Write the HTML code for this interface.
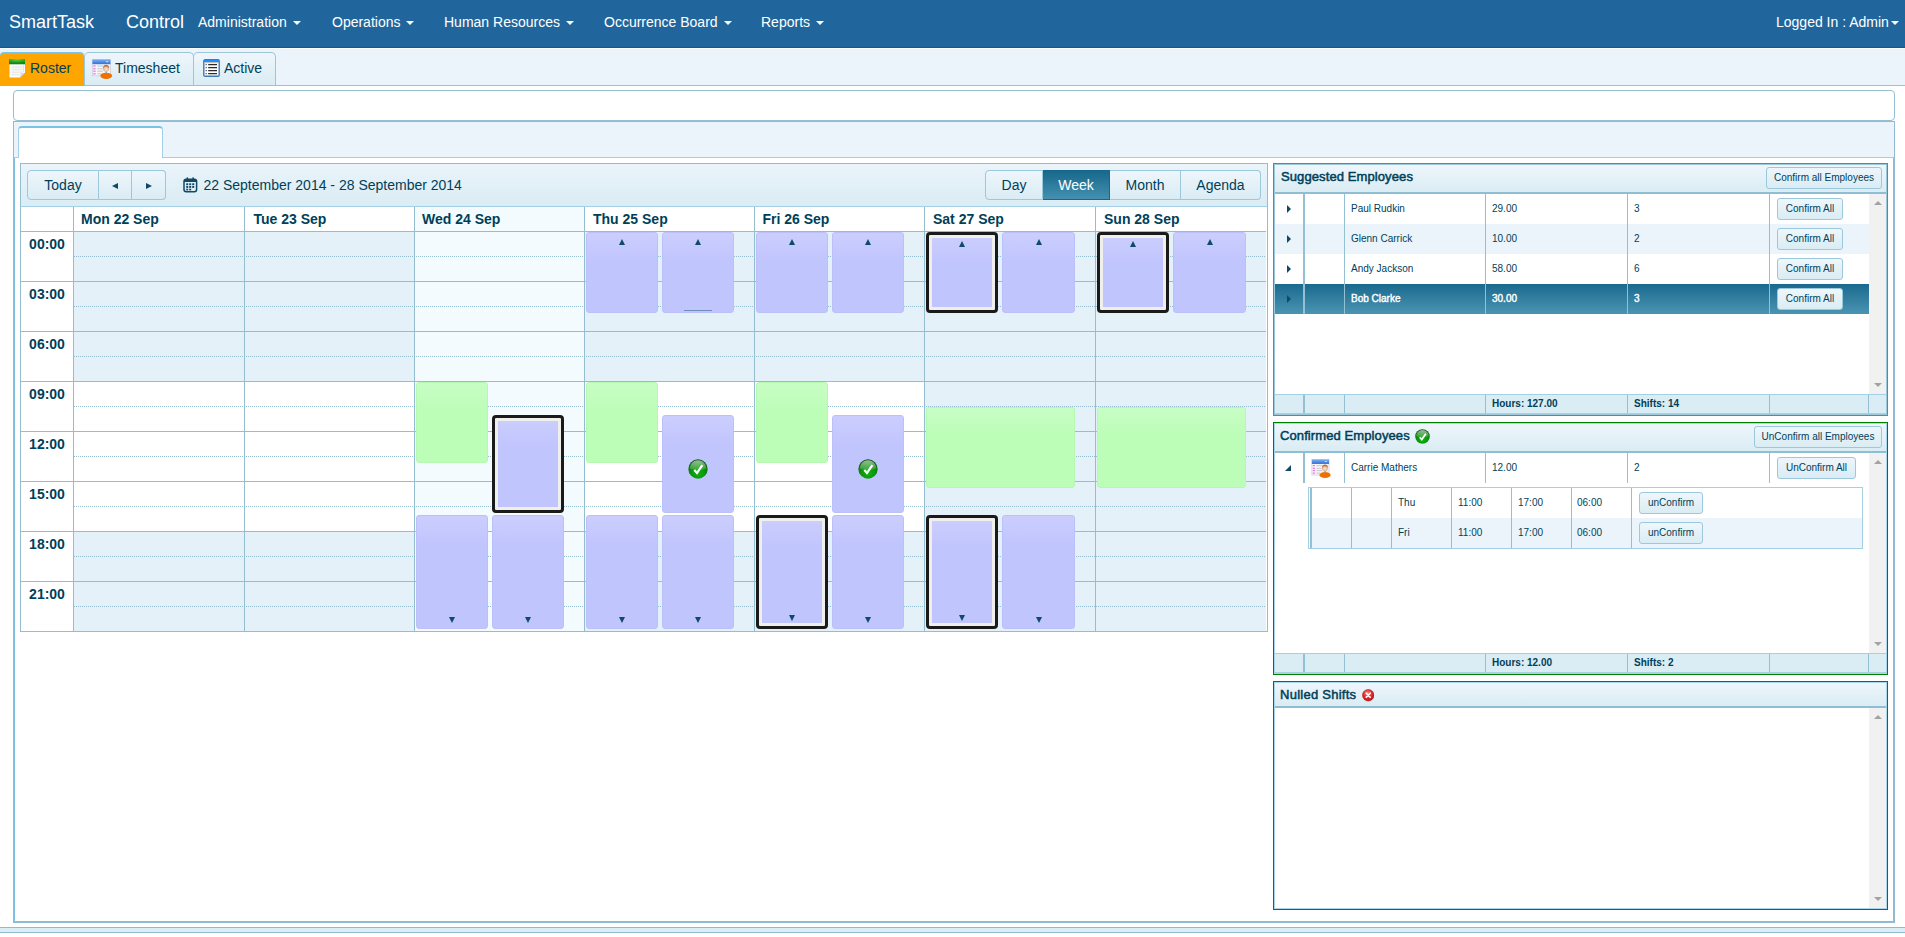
<!DOCTYPE html>
<html>
<head>
<meta charset="utf-8">
<title>SmartTask Control</title>
<style>
*{box-sizing:border-box;margin:0;padding:0}
html,body{width:1905px;height:937px;overflow:hidden;background:#fff}
body{font-family:"Liberation Sans",sans-serif;color:#003f59;position:relative;font-size:12px}
.abs{position:absolute}
/* navbar */
#nav{left:0;top:0;width:1905px;height:48px;background:#20669c;border-bottom:1px solid #10598f}
#nav span{position:absolute;color:#fff;white-space:nowrap}
.brand{font-size:18px;top:12px}
.mi{font-size:14px;top:14px}
.caret{display:inline-block;width:0;height:0;border-left:4px solid transparent;border-right:4px solid transparent;border-top:4px solid #fff;vertical-align:middle;margin-left:2px}
/* top tab strip */
#tabs{left:0;top:48px;width:1905px;height:38px;background:#ecf4fb;box-shadow:inset 0 1px 0 #f9fcfe;border-bottom:1px solid #86c6e6}
.tab{position:absolute;top:4px;height:33px;border:1px solid #9dc6d8;border-bottom:none;border-radius:5px 5px 0 0;background:linear-gradient(#eef6fb,#daecf4);font-size:14px;color:#003f59;line-height:30px;white-space:nowrap}
.tab.on{background:#ffa500;border:none;border-top:2px solid #7ac3e6;height:34px;line-height:29px;border-radius:4px 4px 0 0}
/* panels */
#bar{left:13px;top:90px;width:1882px;height:31px;border:1px solid #94c0d2;border-radius:4px;background:#fff}
#panel{left:13px;top:121px;width:1882px;height:802px;border:1px solid #8fbcd0;background:#fff}
#pstrip{left:14px;top:122px;width:1880px;height:36px;background:#ecf4fb;border-bottom:1px solid #a3d0e4}
#ptab{left:18px;top:126px;width:145px;height:32px;background:#fff;border:1px solid #a3d0e4;border-top:2px solid #7ac3e6;border-bottom:none;border-radius:4px 4px 0 0}
#pleft{left:14px;top:158px;width:1880px;height:764px;border:1px solid #7cc1e1;border-top:none}

/* scheduler */
#sch{left:20px;top:163px;width:1248px;height:469px;border:1px solid #94bdd0;background:#fff;overflow:hidden;font-size:14px}
.tb{left:0;top:0;width:1246px;height:43px;background:linear-gradient(#eaf4fa,#daecf4);border-bottom:1px solid #a3d0e4}
.btng{height:30px;white-space:nowrap;font-size:0}
.btng .b{display:inline-block;height:30px;line-height:28px;text-align:center;font-size:14px;border:1px solid #9cc8dc;border-left:none;vertical-align:top;color:#003f59;background:linear-gradient(#eef6fb,#daecf4)}
.btng .b.f{border-left:1px solid #9cc8dc;border-radius:4px 0 0 4px}
.btng .b.l{border-radius:0 4px 4px 0}
.btng .b.on{background:linear-gradient(#17688c,#4590b0);color:#fff;border-color:#13688c}
.tl,.tr{display:inline-block;width:0;height:0;border-top:3.5px solid transparent;border-bottom:3.5px solid transparent;vertical-align:middle;margin-top:0px}
.tl{border-right:6px solid #0f4a66}
.tr{border-left:6px solid #0f4a66}
.hl{height:1px;background:#94bdd0}
.vl{width:1px;background:#94bdd0}
.dl{height:1px;background-image:linear-gradient(90deg,#94bdd0 50%,transparent 50%);background-size:2px 1px}
.dh{font-weight:bold;font-size:14px;white-space:nowrap;line-height:16px}
.th{font-weight:bold;font-size:14px;text-align:center;line-height:16px}
.ev{border-radius:3px}
.ev.p{background:linear-gradient(#cbcefd 0,#c1c5fd 28px,#c1c5fd);border:1px solid #bcc0fa}
.ev.g{background:linear-gradient(#c8fec4 0,#bcfdb8 28px,#bcfdb8);border:1px solid #b6f7b2}
.ev.sel{border:3px solid #1a1a1a;box-shadow:inset 0 0 0 3px #efefec;border-radius:4px}
.au,.ad{position:absolute;left:50%;margin-left:-3px;width:0;height:0;border-left:3.5px solid transparent;border-right:3.5px solid transparent}
.au{top:6px;border-bottom:6px solid #0f4a66}
.ad{bottom:5px;border-top:6px solid #0f4a66}
.sel .au{top:6px;margin-left:-3.5px}
.sel .ad{bottom:5px;margin-left:-3.5px}
.ul{position:absolute;left:21px;bottom:1px;width:28px;height:1px;background:#6f8fb5}
.ck{position:absolute;left:50%;top:50%;margin:-5px 0 0 -10px}

/* right panels */
.rp{background:#fff;overflow:hidden;font-size:10px}
.rh{background:linear-gradient(#eef6fb,#daecf4);border-bottom:2px solid #8fbdd2}
.rt{position:absolute;font-weight:normal;font-size:13px;white-space:nowrap;color:#003f59;line-height:16px;-webkit-text-stroke:0.5px #003f59;letter-spacing:0.1px}
.kb{position:absolute;border:1px solid #9cc8dc;border-radius:3px;background:linear-gradient(#eef6fb,#daecf4);font-size:10px;text-align:center;white-space:nowrap;color:#003f59}
.row{background:#fff}
.row.alt{background:#ebf4fa}
.row.selr{background:linear-gradient(#1a6a8e,#4b94b3);color:#fff}
.row.selr .ct{color:#fff;-webkit-text-stroke:0.4px #fff}
.cv{position:absolute;top:0;bottom:0;width:1px;background:#94c0d4}
.ct{position:absolute;top:9px;line-height:12px;font-size:10px;white-space:nowrap}
.ft{position:absolute;top:3px;line-height:12px;font-size:10px;font-weight:bold;white-space:nowrap}
.rf{background:#daecf4;border-top:1px solid #a3d0e4}
.ex{position:absolute;width:0;height:0;border-top:4.5px solid transparent;border-bottom:4.5px solid transparent;border-left:4.5px solid #0f4a66}
.exd{position:absolute;width:0;height:0;border-left:6px solid transparent;border-bottom:6px solid #0f4a66}
.sb{background:#f1f1f1}
.su,.sd{position:absolute;left:5px;width:0;height:0;border-left:4px solid transparent;border-right:4px solid transparent}
.su{top:7px;border-bottom:4px solid #a3a3a3}
.sd{bottom:7px;border-top:4px solid #a3a3a3}
</style>
</head>
<body>
<div id="nav" class="abs">
  <span class="brand" style="left:9px">SmartTask</span>
  <span class="brand" style="left:126px">Control</span>
  <span class="mi" style="left:198px">Administration <i class="caret"></i></span>
  <span class="mi" style="left:332px">Operations <i class="caret"></i></span>
  <span class="mi" style="left:444px">Human Resources <i class="caret"></i></span>
  <span class="mi" style="left:604px">Occurrence Board <i class="caret"></i></span>
  <span class="mi" style="left:761px">Reports <i class="caret"></i></span>
  <span class="mi" style="left:1776px">Logged In : Admin<i class="caret" style="margin-left:2px"></i></span>
</div>
<div id="tabs" class="abs">
  <div class="tab" style="left:84px;width:110px"><svg style="position:absolute;left:7px;top:6px" width="21" height="21" viewBox="0 0 21 21"><defs><linearGradient id="gb" x1="0" y1="0" x2="0" y2="1"><stop offset="0" stop-color="#7db2f7"/><stop offset="1" stop-color="#2f6fd6"/></linearGradient><radialGradient id="gh" cx="50%" cy="60%" r="60%"><stop offset="0" stop-color="#fde6d2"/><stop offset="1" stop-color="#d9a27a"/></radialGradient></defs><rect x="0.4" y="0.4" width="18" height="16.4" fill="#f6f6f9" stroke="#c9c9d6" stroke-width="0.7"/><rect x="0.4" y="0.4" width="18" height="4.8" fill="url(#gb)"/><rect x="14" y="2" width="2.2" height="1.2" fill="#b9d5fb"/><g fill="#ef6be6"><rect x="1.3" y="6.4" width="2.3" height="1.2"/><rect x="1.3" y="9.2" width="2.3" height="1.2"/><rect x="1.3" y="11.6" width="2.3" height="1.2"/><rect x="1.3" y="14.2" width="2.3" height="1.2"/></g><g fill="#c4c4cc"><rect x="5.2" y="6.5" width="6" height="1"/><rect x="5.2" y="9.3" width="5.6" height="1"/><rect x="5.2" y="11.7" width="5.6" height="1"/><rect x="5.2" y="14.3" width="4" height="1"/></g><ellipse cx="14.2" cy="16.8" rx="5.9" ry="3.1" fill="#ee7100"/><rect x="13.4" y="12.3" width="1.6" height="2" fill="#9aa0a6"/><circle cx="14.1" cy="9.6" r="3.1" fill="url(#gh)"/><path d="M10.9 9.2 Q11.2 5.6 14.2 5.7 Q17.2 5.7 17.3 9.2 Q15.8 7.3 14.1 7.6 Q12.4 7.3 10.9 9.2Z" fill="#b07a4c"/></svg><span style="position:absolute;left:30px">Timesheet</span></div>
  <div class="tab" style="left:193px;width:83px"><svg style="position:absolute;left:9px;top:6px" width="17" height="18" viewBox="0 0 17 18"><rect x="0.8" y="0.8" width="15.4" height="16.4" rx="1.2" fill="#fff" stroke="#3f79b3" stroke-width="1.4"/><rect x="1" y="1" width="15" height="2.2" fill="#1e8fff"/><rect x="1.6" y="3.2" width="13.8" height="1" fill="#bdb6b0"/><g stroke="#2a2a2a" stroke-width="1.15"><path d="M5.2 5.6H14M5.2 8.6H14M5.2 11.6H14M5.2 14.6H14"/></g><g fill="#2a2a2a"><rect x="2.6" y="5.1" width="1.1" height="1.1"/><rect x="2.6" y="8.1" width="1.1" height="1.1"/><rect x="2.6" y="11.1" width="1.1" height="1.1"/><rect x="2.6" y="14.1" width="1.1" height="1.1"/></g></svg><span style="position:absolute;left:30px">Active</span></div>
  <div class="tab on" style="left:0;width:84px"><svg style="position:absolute;left:9px;top:5px" width="17" height="19" viewBox="0 0 17 19"><defs><radialGradient id="gc" cx="50%" cy="0%" r="80%"><stop offset="0" stop-color="#6fdc4a"/><stop offset="1" stop-color="#0e8a10"/></radialGradient></defs><path d="M0.5 1 H16 V13.5 L11 18.5 H0.5Z" fill="#fdfdfd"/><path d="M16 13.5 L11 18.5 L11.6 14.2Z" fill="#d8d8d8"/><rect x="0" y="0" width="16" height="5.3" fill="url(#gc)"/><g stroke="#dcdcdc" stroke-width="0.8"><path d="M2.5 8.2H13.5M2.5 10.7H13.5M2.5 13.2H13.5M2.5 15.7H10"/></g><g stroke="#ececec" stroke-width="0.7"><path d="M4.5 6.5V16.5M7.2 6.5V16.5M9.9 6.5V16.5M12.6 6.5V14"/></g><path d="M14.6 6V13" stroke="#e9c6f5" stroke-width="0.7"/></svg><span style="position:absolute;left:30px">Roster</span></div>
</div>
<div id="bar" class="abs"></div>
<div id="panel" class="abs"></div>
<div id="pstrip" class="abs"></div>
<div id="ptab" class="abs"></div>
<div id="pleft" class="abs"></div>
<!--SCHED-->
<div id="sch" class="abs">
<div class="abs tb"></div>
<div class="abs btng" style="left:6px;top:6px;width:139px"><span class="b f" style="width:72px">Today</span><span class="b" style="width:33px"><i class="tl"></i></span><span class="b l" style="width:34px"><i class="tr"></i></span></div>
<div class="abs" style="left:182.5px;top:13px;font-size:14px;white-space:nowrap">22 September 2014 - 28 September 2014</div>
<svg class="abs" style="left:162px;top:12.5px" width="15" height="16" viewBox="0 0 15 16"><rect x="1" y="2.2" width="12.6" height="12.6" rx="2.2" fill="none" stroke="#0f4a66" stroke-width="1.5"/><path d="M1 5V4.2Q1 2.2 3 2.2H11.6Q13.6 2.2 13.6 4.2V5Z" fill="#0f4a66"/><rect x="3.6" y="0.4" width="1.5" height="2.2" fill="#0f4a66"/><rect x="9.4" y="0.4" width="1.5" height="2.2" fill="#0f4a66"/><g fill="#0f4a66"><rect x="3.2" y="6.3" width="2" height="1.9"/><rect x="6.2" y="6.3" width="2" height="1.9"/><rect x="9.2" y="6.3" width="2" height="1.9"/><rect x="3.2" y="9" width="2" height="1.9"/><rect x="6.2" y="9" width="2" height="1.9"/><rect x="9.2" y="9" width="2" height="1.9"/><rect x="3.2" y="11.7" width="2" height="1.7"/><rect x="6.2" y="11.7" width="2" height="1.7"/></g></svg>
<div class="abs btng" style="left:964px;top:6px;width:277px"><span class="b f" style="width:58px">Day</span><span class="b on" style="width:67px">Week</span><span class="b" style="width:71px">Month</span><span class="b l" style="width:80px">Agenda</span></div>
<div class="abs" style="left:0;top:43px;width:1246px;height:24px;background:#fff"></div>
<div class="abs" style="left:394px;top:43px;width:169px;height:24px;background:#f4fbfe"></div>
<div class="abs" style="left:0;top:68px;width:52px;height:399px;background:#fff"></div>
<div class="abs" style="left:53px;top:68px;width:170px;height:150px;background:#e4f1f8"></div>
<div class="abs" style="left:53px;top:218px;width:170px;height:149px;background:#fff"></div>
<div class="abs" style="left:53px;top:368px;width:170px;height:99px;background:#e4f1f8"></div>
<div class="abs" style="left:224px;top:68px;width:169px;height:150px;background:#e4f1f8"></div>
<div class="abs" style="left:224px;top:218px;width:169px;height:149px;background:#fff"></div>
<div class="abs" style="left:224px;top:368px;width:169px;height:99px;background:#e4f1f8"></div>
<div class="abs" style="left:394px;top:68px;width:169px;height:399px;background:#f4fbfe"></div>
<div class="abs" style="left:564px;top:68px;width:169px;height:150px;background:#e4f1f8"></div>
<div class="abs" style="left:564px;top:218px;width:169px;height:149px;background:#fff"></div>
<div class="abs" style="left:564px;top:368px;width:169px;height:99px;background:#e4f1f8"></div>
<div class="abs" style="left:734px;top:68px;width:169px;height:150px;background:#e4f1f8"></div>
<div class="abs" style="left:734px;top:218px;width:169px;height:149px;background:#fff"></div>
<div class="abs" style="left:734px;top:368px;width:169px;height:99px;background:#e4f1f8"></div>
<div class="abs" style="left:904px;top:68px;width:170px;height:399px;background:#e4f1f8"></div>
<div class="abs" style="left:1075px;top:68px;width:171px;height:399px;background:#e4f1f8"></div>
<div class="abs hl" style="left:0;top:67px;width:1246px"></div>
<div class="abs hl" style="left:0;top:117px;width:1246px"></div>
<div class="abs hl" style="left:0;top:167px;width:1246px"></div>
<div class="abs hl" style="left:0;top:217px;width:1246px"></div>
<div class="abs hl" style="left:0;top:267px;width:1246px"></div>
<div class="abs hl" style="left:0;top:317px;width:1246px"></div>
<div class="abs hl" style="left:0;top:367px;width:1246px"></div>
<div class="abs hl" style="left:0;top:417px;width:1246px"></div>
<div class="abs dl" style="left:53px;top:92px;width:1193px"></div>
<div class="abs dl" style="left:53px;top:142px;width:1193px"></div>
<div class="abs dl" style="left:53px;top:192px;width:1193px"></div>
<div class="abs dl" style="left:53px;top:242px;width:1193px"></div>
<div class="abs dl" style="left:53px;top:292px;width:1193px"></div>
<div class="abs dl" style="left:53px;top:342px;width:1193px"></div>
<div class="abs dl" style="left:53px;top:392px;width:1193px"></div>
<div class="abs dl" style="left:53px;top:442px;width:1193px"></div>
<div class="abs vl" style="left:52px;top:43px;height:424px"></div>
<div class="abs vl" style="left:223px;top:43px;height:424px"></div>
<div class="abs vl" style="left:393px;top:43px;height:424px"></div>
<div class="abs vl" style="left:563px;top:43px;height:424px"></div>
<div class="abs vl" style="left:733px;top:43px;height:424px"></div>
<div class="abs vl" style="left:903px;top:43px;height:424px"></div>
<div class="abs vl" style="left:1074px;top:43px;height:424px"></div>
<div class="abs dh" style="left:60px;top:47px">Mon 22 Sep</div>
<div class="abs dh" style="left:232.5px;top:47px">Tue 23 Sep</div>
<div class="abs dh" style="left:401px;top:47px">Wed 24 Sep</div>
<div class="abs dh" style="left:572px;top:47px">Thu 25 Sep</div>
<div class="abs dh" style="left:741.5px;top:47px">Fri 26 Sep</div>
<div class="abs dh" style="left:912px;top:47px">Sat 27 Sep</div>
<div class="abs dh" style="left:1083px;top:47px">Sun 28 Sep</div>
<div class="abs th" style="left:0;top:72px;width:52px">00:00</div>
<div class="abs th" style="left:0;top:122px;width:52px">03:00</div>
<div class="abs th" style="left:0;top:172px;width:52px">06:00</div>
<div class="abs th" style="left:0;top:222px;width:52px">09:00</div>
<div class="abs th" style="left:0;top:272px;width:52px">12:00</div>
<div class="abs th" style="left:0;top:322px;width:52px">15:00</div>
<div class="abs th" style="left:0;top:372px;width:52px">18:00</div>
<div class="abs th" style="left:0;top:422px;width:52px">21:00</div>
<div class="abs ev p " style="left:565px;top:68px;width:72px;height:81px"><i class="au"></i></div>
<div class="abs ev p " style="left:641px;top:68px;width:72px;height:81px"><i class="au"></i><i class="ul"></i></div>
<div class="abs ev p " style="left:735px;top:68px;width:72px;height:81px"><i class="au"></i></div>
<div class="abs ev p " style="left:811px;top:68px;width:72px;height:81px"><i class="au"></i></div>
<div class="abs ev p sel" style="left:905px;top:68px;width:72px;height:81px"><i class="au"></i></div>
<div class="abs ev p " style="left:981px;top:68px;width:73px;height:81px"><i class="au"></i></div>
<div class="abs ev p sel" style="left:1076px;top:68px;width:72px;height:81px"><i class="au"></i></div>
<div class="abs ev p " style="left:1152px;top:68px;width:73px;height:81px"><i class="au"></i></div>
<div class="abs ev g" style="left:395px;top:218px;width:72px;height:81px"></div>
<div class="abs ev g" style="left:565px;top:218px;width:72px;height:81px"></div>
<div class="abs ev g" style="left:735px;top:218px;width:72px;height:81px"></div>
<div class="abs ev g" style="left:905px;top:243px;width:149px;height:81px"></div>
<div class="abs ev g" style="left:1076px;top:243px;width:149px;height:81px"></div>
<div class="abs ev p sel" style="left:471px;top:251px;width:72px;height:98px"></div>
<div class="abs ev p" style="left:641px;top:251px;width:72px;height:98px"><svg class="ck" width="20" height="20" viewBox="0 0 20 20"><defs><radialGradient id="g1" cx="50%" cy="72%" r="62%"><stop offset="0" stop-color="#0cb40c"/><stop offset="0.55" stop-color="#0c960c"/><stop offset="0.85" stop-color="#0a7a0c"/><stop offset="1" stop-color="#085c0a"/></radialGradient><linearGradient id="g1h" x1="0" y1="0" x2="0" y2="1"><stop offset="0" stop-color="#fff" stop-opacity="0.6"/><stop offset="1" stop-color="#fff" stop-opacity="0.12"/></linearGradient></defs><circle cx="10" cy="10" r="9.7" fill="url(#g1)"/><path d="M1.6 9.6 A8.4 8.4 0 0 1 18.4 9.6 Q10 12.6 1.6 9.6Z" fill="url(#g1h)"/><path d="M6.3 11 L9 14 L14.4 6.2" fill="none" stroke="#fff" stroke-width="2.2" stroke-linejoin="miter"/></svg></div>
<div class="abs ev p" style="left:811px;top:251px;width:72px;height:98px"><svg class="ck" width="20" height="20" viewBox="0 0 20 20"><defs><radialGradient id="g1" cx="50%" cy="72%" r="62%"><stop offset="0" stop-color="#0cb40c"/><stop offset="0.55" stop-color="#0c960c"/><stop offset="0.85" stop-color="#0a7a0c"/><stop offset="1" stop-color="#085c0a"/></radialGradient><linearGradient id="g1h" x1="0" y1="0" x2="0" y2="1"><stop offset="0" stop-color="#fff" stop-opacity="0.6"/><stop offset="1" stop-color="#fff" stop-opacity="0.12"/></linearGradient></defs><circle cx="10" cy="10" r="9.7" fill="url(#g1)"/><path d="M1.6 9.6 A8.4 8.4 0 0 1 18.4 9.6 Q10 12.6 1.6 9.6Z" fill="url(#g1h)"/><path d="M6.3 11 L9 14 L14.4 6.2" fill="none" stroke="#fff" stroke-width="2.2" stroke-linejoin="miter"/></svg></div>
<div class="abs ev p " style="left:395px;top:351px;width:72px;height:114px"><i class="ad"></i></div>
<div class="abs ev p " style="left:471px;top:351px;width:72px;height:114px"><i class="ad"></i></div>
<div class="abs ev p " style="left:565px;top:351px;width:72px;height:114px"><i class="ad"></i></div>
<div class="abs ev p " style="left:641px;top:351px;width:72px;height:114px"><i class="ad"></i></div>
<div class="abs ev p sel" style="left:735px;top:351px;width:72px;height:114px"><i class="ad"></i></div>
<div class="abs ev p " style="left:811px;top:351px;width:72px;height:114px"><i class="ad"></i></div>
<div class="abs ev p sel" style="left:905px;top:351px;width:72px;height:114px"><i class="ad"></i></div>
<div class="abs ev p " style="left:981px;top:351px;width:73px;height:114px"><i class="ad"></i></div>
<div class="abs" style="left:1245px;top:43px;width:1px;height:425px;background:#fff"></div>
</div>
<!--/SCHED-->
<!--RIGHT-->
<div class="abs" style="left:1273px;top:163px;width:615px;height:253px;background:#7d7d7d"></div>
<div class="abs rp" style="left:1274px;top:164px;width:613px;height:251px;border:1px solid #9cc8dc">
<div class="abs rh" style="left:0;top:0;width:611px;height:29px"><span class="rt" style="left:6px;top:4px">Suggested Employees</span><span class="kb" style="left:491px;top:2px;width:116px;height:22px;line-height:20px">Confirm all Employees</span></div>
<div class="abs row" style="left:0;top:29px;width:594px;height:30px">
<i class="ex" style="left:12px;top:10.5px"></i>
<i class="cv" style="left:29px"></i>
<i class="cv" style="left:69px"></i>
<i class="cv" style="left:210px"></i>
<i class="cv" style="left:352px"></i>
<i class="cv" style="left:494px"></i>
<i class="cv" style="left:28px"></i>
<span class="ct" style="left:76px">Paul Rudkin</span><span class="ct" style="left:217px">29.00</span><span class="ct" style="left:359px">3</span>
<span class="kb" style="left:502px;top:4px;width:66px;height:22px;line-height:20px">Confirm All</span>
</div>
<div class="abs row alt" style="left:0;top:59px;width:594px;height:30px">
<i class="ex" style="left:12px;top:10.5px"></i>
<i class="cv" style="left:29px"></i>
<i class="cv" style="left:69px"></i>
<i class="cv" style="left:210px"></i>
<i class="cv" style="left:352px"></i>
<i class="cv" style="left:494px"></i>
<i class="cv" style="left:28px"></i>
<span class="ct" style="left:76px">Glenn Carrick</span><span class="ct" style="left:217px">10.00</span><span class="ct" style="left:359px">2</span>
<span class="kb" style="left:502px;top:4px;width:66px;height:22px;line-height:20px">Confirm All</span>
</div>
<div class="abs row" style="left:0;top:89px;width:594px;height:30px">
<i class="ex" style="left:12px;top:10.5px"></i>
<i class="cv" style="left:29px"></i>
<i class="cv" style="left:69px"></i>
<i class="cv" style="left:210px"></i>
<i class="cv" style="left:352px"></i>
<i class="cv" style="left:494px"></i>
<i class="cv" style="left:28px"></i>
<span class="ct" style="left:76px">Andy Jackson</span><span class="ct" style="left:217px">58.00</span><span class="ct" style="left:359px">6</span>
<span class="kb" style="left:502px;top:4px;width:66px;height:22px;line-height:20px">Confirm All</span>
</div>
<div class="abs row alt selr" style="left:0;top:119px;width:594px;height:30px">
<i class="ex" style="left:12px;top:10.5px"></i>
<i class="cv" style="left:29px"></i>
<i class="cv" style="left:69px"></i>
<i class="cv" style="left:210px"></i>
<i class="cv" style="left:352px"></i>
<i class="cv" style="left:494px"></i>
<i class="cv" style="left:28px"></i>
<span class="ct" style="left:76px">Bob Clarke</span><span class="ct" style="left:217px">30.00</span><span class="ct" style="left:359px">3</span>
<span class="kb" style="left:502px;top:4px;width:66px;height:22px;line-height:20px">Confirm All</span>
</div>
<div class="abs sb" style="left:594px;top:29px;width:17px;height:200px"><i class="su"></i><i class="sd"></i></div>
<div class="abs rf" style="left:0;top:229px;width:611px;height:20px;border-bottom:1px solid #a8d0e2">
<i class="cv" style="left:29px"></i>
<i class="cv" style="left:69px"></i>
<i class="cv" style="left:210px"></i>
<i class="cv" style="left:352px"></i>
<i class="cv" style="left:494px"></i>
<i class="cv" style="left:28px"></i>
<i class="cv" style="left:593px"></i>
<span class="ft" style="left:217px">Hours: 127.00</span><span class="ft" style="left:359px">Shifts: 14</span></div>
</div>
<div class="abs" style="left:1273px;top:422px;width:615px;height:253px;background:#008000"></div>
<div class="abs rp" style="left:1274px;top:423px;width:613px;height:251px;border:1px solid #a9d6ea">
<div class="abs rh" style="left:0;top:0;width:611px;height:29px"><span class="rt" style="left:5px;top:4px">Confirmed Employees</span><svg class="abs" style="left:140px;top:5px" width="15" height="15" viewBox="0 0 20 20"><circle cx="10" cy="10" r="9.7" fill="url(#g1)"/><path d="M1.6 9.6 A8.4 8.4 0 0 1 18.4 9.6 Q10 12.6 1.6 9.6Z" fill="url(#g1h)"/><path d="M6.3 11 L9 14 L14.4 6.2" fill="none" stroke="#fff" stroke-width="2.3"/></svg><span class="kb" style="left:479px;top:2px;width:128px;height:22px;line-height:20px">UnConfirm all Employees</span></div>
<div class="abs row" style="left:0;top:29px;width:594px;height:30px">
<i class="exd" style="left:10px;top:12px"></i>
<i class="cv" style="left:29px"></i>
<i class="cv" style="left:69px"></i>
<i class="cv" style="left:210px"></i>
<i class="cv" style="left:352px"></i>
<i class="cv" style="left:494px"></i>
<i class="cv" style="left:28px"></i>
<span class="ct" style="left:76px">Carrie Mathers</span><span class="ct" style="left:217px">12.00</span><span class="ct" style="left:359px">2</span>
<span class="kb" style="left:502px;top:4px;width:79px;height:22px;line-height:20px">UnConfirm All</span>
<svg class="abs" style="left:36px;top:6px" width="21" height="20" viewBox="0 0 21 21"><rect x="0.4" y="0.4" width="18" height="16.4" fill="#f6f6f9" stroke="#c9c9d6" stroke-width="0.7"/><rect x="0.4" y="0.4" width="18" height="4.8" fill="url(#gb)"/><rect x="14" y="2" width="2.2" height="1.2" fill="#b9d5fb"/><g fill="#ef6be6"><rect x="1.3" y="6.4" width="2.3" height="1.2"/><rect x="1.3" y="9.2" width="2.3" height="1.2"/><rect x="1.3" y="11.6" width="2.3" height="1.2"/><rect x="1.3" y="14.2" width="2.3" height="1.2"/></g><g fill="#c4c4cc"><rect x="5.2" y="6.5" width="6" height="1"/><rect x="5.2" y="9.3" width="5.6" height="1"/><rect x="5.2" y="11.7" width="5.6" height="1"/><rect x="5.2" y="14.3" width="4" height="1"/></g><ellipse cx="14.2" cy="16.8" rx="5.9" ry="3.1" fill="#ee7100"/><rect x="13.4" y="12.3" width="1.6" height="2" fill="#9aa0a6"/><circle cx="14.1" cy="9.6" r="3.1" fill="url(#gh)"/><path d="M10.9 9.2 Q11.2 5.6 14.2 5.7 Q17.2 5.7 17.3 9.2 Q15.8 7.3 14.1 7.6 Q12.4 7.3 10.9 9.2Z" fill="#b07a4c"/></svg>
</div>
<div class="abs" style="left:33px;top:63px;width:555px;height:62px;border:1px solid #a3d0e4;background:#fff"><i class="cv" style="left:1px;width:2px"></i>
<div class="abs row" style="left:3px;top:0px;width:550px;height:30px">
<i class="cv" style="left:39px"></i>
<i class="cv" style="left:79px"></i>
<i class="cv" style="left:139px"></i>
<i class="cv" style="left:199px"></i>
<i class="cv" style="left:259px"></i>
<i class="cv" style="left:319px"></i>
<span class="ct" style="left:86px">Thu</span><span class="ct" style="left:146px">11:00</span><span class="ct" style="left:206px">17:00</span><span class="ct" style="left:265px">06:00</span>
<span class="kb" style="left:327px;top:4px;width:64px;height:22px;line-height:20px">unConfirm</span>
</div>
<div class="abs row alt" style="left:3px;top:30px;width:550px;height:30px">
<i class="cv" style="left:39px"></i>
<i class="cv" style="left:79px"></i>
<i class="cv" style="left:139px"></i>
<i class="cv" style="left:199px"></i>
<i class="cv" style="left:259px"></i>
<i class="cv" style="left:319px"></i>
<span class="ct" style="left:86px">Fri</span><span class="ct" style="left:146px">11:00</span><span class="ct" style="left:206px">17:00</span><span class="ct" style="left:265px">06:00</span>
<span class="kb" style="left:327px;top:4px;width:64px;height:22px;line-height:20px">unConfirm</span>
</div>
</div>
<div class="abs sb" style="left:594px;top:29px;width:17px;height:200px"><i class="su"></i><i class="sd"></i></div>
<div class="abs rf" style="left:0;top:229px;width:611px;height:20px;border-bottom:1px solid #a8d0e2">
<i class="cv" style="left:29px"></i>
<i class="cv" style="left:69px"></i>
<i class="cv" style="left:210px"></i>
<i class="cv" style="left:352px"></i>
<i class="cv" style="left:494px"></i>
<i class="cv" style="left:28px"></i>
<i class="cv" style="left:593px"></i>
<span class="ft" style="left:217px">Hours: 12.00</span><span class="ft" style="left:359px">Shifts: 2</span></div>
</div>
<div class="abs" style="left:1273px;top:681px;width:615px;height:229px;background:#ff0000"></div>
<div class="abs rp" style="left:1274px;top:682px;width:613px;height:227px;border:1px solid #a9d6ea">
<div class="abs rh" style="left:0;top:0;width:611px;height:25px"><span class="rt" style="left:5px;top:4px;letter-spacing:0.26px">Nulled Shifts</span><svg class="abs" style="left:86.5px;top:6px" width="12.5" height="12.5" viewBox="0 0 13 13"><defs><radialGradient id="g2" cx="45%" cy="35%" r="65%"><stop offset="0" stop-color="#ff8a8a"/><stop offset="0.55" stop-color="#e52e2e"/><stop offset="1" stop-color="#b80f0f"/></radialGradient></defs><circle cx="6.5" cy="6.5" r="6" fill="url(#g2)" stroke="#b01515" stroke-width="0.6"/><path d="M4.4 4.4 L8.6 8.6 M8.6 4.4 L4.4 8.6" stroke="#fff" stroke-width="1.7" stroke-linecap="round"/></svg></div>
<div class="abs sb" style="left:594px;top:25px;width:17px;height:200px"><i class="su"></i><i class="sd"></i></div>
</div>
<div class="abs" style="left:0;top:927px;width:1905px;height:6px;background:#dcedf5;border-top:1px solid #7cc1e1;border-bottom:1px solid #94bdd0"></div>
<!--/RIGHT-->
</body>
</html>
